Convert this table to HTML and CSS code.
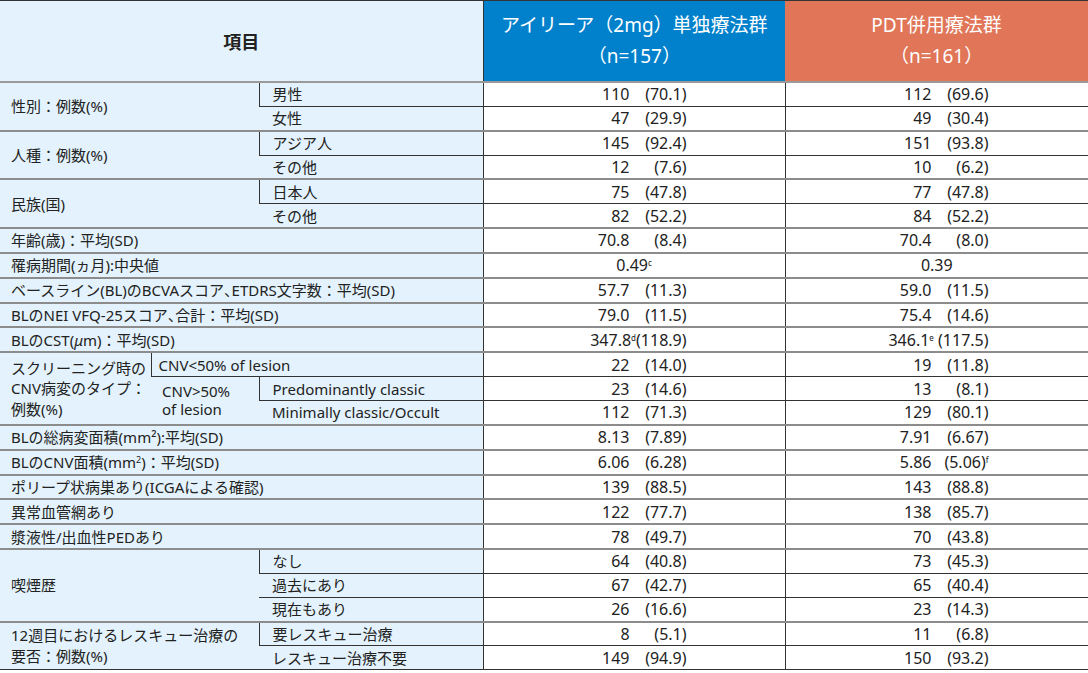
FILE: index.html
```html
<!DOCTYPE html>
<html lang="ja">
<head>
<meta charset="utf-8">
<title>患者背景</title>
<link rel="stylesheet" href="styles.css">
</head>
<body>
<table class="bg-table">
  <colgroup>
    <col class="c-a">
    <col class="c-b">
    <col class="c-c">
    <col class="c-d">
    <col class="c-e">
  </colgroup>
  <thead>
    <tr class="head">
      <th colspan="3" class="h-item">項目</th>
      <th class="h-blue">アイリーア（2mg）単独療法群<br>（n=157）</th>
      <th class="h-orange">PDT併用療法群<br>（n=161）</th>
    </tr>
  </thead>
  <tbody>
    <tr class="g">
      <td colspan="2" rowspan="2" class="lab">性別：例数(%)</td>
      <td class="lab sub">男性</td>
      <td class="num"><span class="n">110</span><span class="p">(70.1)</span></td>
      <td class="num"><span class="n">112</span><span class="p">(69.6)</span></td>
    </tr>
    <tr>
      <td class="lab sub">女性</td>
      <td class="num"><span class="n">47</span><span class="p">(29.9)</span></td>
      <td class="num"><span class="n">49</span><span class="p">(30.4)</span></td>
    </tr>
    <tr class="g">
      <td colspan="2" rowspan="2" class="lab">人種：例数(%)</td>
      <td class="lab sub">アジア人</td>
      <td class="num"><span class="n">145</span><span class="p">(92.4)</span></td>
      <td class="num"><span class="n">151</span><span class="p">(93.8)</span></td>
    </tr>
    <tr>
      <td class="lab sub">その他</td>
      <td class="num"><span class="n">12</span><span class="p">(7.6)</span></td>
      <td class="num"><span class="n">10</span><span class="p">(6.2)</span></td>
    </tr>
    <tr class="g">
      <td colspan="2" rowspan="2" class="lab">民族(国)</td>
      <td class="lab sub">日本人</td>
      <td class="num"><span class="n">75</span><span class="p">(47.8)</span></td>
      <td class="num"><span class="n">77</span><span class="p">(47.8)</span></td>
    </tr>
    <tr>
      <td class="lab sub">その他</td>
      <td class="num"><span class="n">82</span><span class="p">(52.2)</span></td>
      <td class="num"><span class="n">84</span><span class="p">(52.2)</span></td>
    </tr>
    <tr class="g">
      <td colspan="3" class="lab">年齢(歳)：平均(SD)</td>
      <td class="num"><span class="n">70.8</span><span class="p">(8.4)</span></td>
      <td class="num"><span class="n">70.4</span><span class="p">(8.0)</span></td>
    </tr>
    <tr class="g">
      <td colspan="3" class="lab">罹病期間(ヵ月):中央値</td>
      <td class="num center">0.49<sup>c</sup></td>
      <td class="num center">0.39</td>
    </tr>
    <tr class="g">
      <td colspan="3" class="lab">ベースライン(BL)のBCVAスコア<span class="tc">、</span>ETDRS文字数：平均(SD)</td>
      <td class="num"><span class="n">57.7</span><span class="p">(11.3)</span></td>
      <td class="num"><span class="n">59.0</span><span class="p">(11.5)</span></td>
    </tr>
    <tr class="g">
      <td colspan="3" class="lab">BLのNEI VFQ-25スコア<span class="tc">、</span>合計：平均(SD)</td>
      <td class="num"><span class="n">79.0</span><span class="p">(11.5)</span></td>
      <td class="num"><span class="n">75.4</span><span class="p">(14.6)</span></td>
    </tr>
    <tr class="g">
      <td colspan="3" class="lab">BLのCST(<i>μ</i>m)：平均(SD)</td>
      <td class="num"><span class="w">347.8<sup>d</sup>(118.9)</span></td>
      <td class="num"><span class="w">346.1<sup>e</sup> (117.5)</span></td>
    </tr>
    <tr class="g">
      <td rowspan="3" class="lab multi">スクリーニング時の<br>CNV病変のタイプ：<br>例数(%)</td>
      <td colspan="2" class="lab sub-b">CNV&lt;50% of lesion</td>
      <td class="num"><span class="n">22</span><span class="p">(14.0)</span></td>
      <td class="num"><span class="n">19</span><span class="p">(11.8)</span></td>
    </tr>
    <tr>
      <td rowspan="2" class="lab tight">CNV&gt;50%<br>of lesion</td>
      <td class="lab sub">Predominantly classic</td>
      <td class="num"><span class="n">23</span><span class="p">(14.6)</span></td>
      <td class="num"><span class="n">13</span><span class="p">(8.1)</span></td>
    </tr>
    <tr>
      <td class="lab sub">Minimally classic/Occult</td>
      <td class="num"><span class="n">112</span><span class="p">(71.3)</span></td>
      <td class="num"><span class="n">129</span><span class="p">(80.1)</span></td>
    </tr>
    <tr class="g">
      <td colspan="3" class="lab">BLの総病変面積(mm²):平均(SD)</td>
      <td class="num"><span class="n">8.13</span><span class="p">(7.89)</span></td>
      <td class="num"><span class="n">7.91</span><span class="p">(6.67)</span></td>
    </tr>
    <tr class="g">
      <td colspan="3" class="lab">BLのCNV面積(mm<sup class="sq">2</sup>)：平均(SD)</td>
      <td class="num"><span class="n">6.06</span><span class="p">(6.28)</span></td>
      <td class="num"><span class="n">5.86</span><span class="p">(5.06)<sup>f</sup></span></td>
    </tr>
    <tr class="g">
      <td colspan="3" class="lab">ポリープ状病巣あり(ICGAによる確認)</td>
      <td class="num"><span class="n">139</span><span class="p">(88.5)</span></td>
      <td class="num"><span class="n">143</span><span class="p">(88.8)</span></td>
    </tr>
    <tr class="g">
      <td colspan="3" class="lab">異常血管網あり</td>
      <td class="num"><span class="n">122</span><span class="p">(77.7)</span></td>
      <td class="num"><span class="n">138</span><span class="p">(85.7)</span></td>
    </tr>
    <tr class="g">
      <td colspan="3" class="lab">漿液性/出血性PEDあり</td>
      <td class="num"><span class="n">78</span><span class="p">(49.7)</span></td>
      <td class="num"><span class="n">70</span><span class="p">(43.8)</span></td>
    </tr>
    <tr class="g">
      <td colspan="2" rowspan="3" class="lab">喫煙歴</td>
      <td class="lab sub">なし</td>
      <td class="num"><span class="n">64</span><span class="p">(40.8)</span></td>
      <td class="num"><span class="n">73</span><span class="p">(45.3)</span></td>
    </tr>
    <tr>
      <td class="lab sub">過去にあり</td>
      <td class="num"><span class="n">67</span><span class="p">(42.7)</span></td>
      <td class="num"><span class="n">65</span><span class="p">(40.4)</span></td>
    </tr>
    <tr>
      <td class="lab sub">現在もあり</td>
      <td class="num"><span class="n">26</span><span class="p">(16.6)</span></td>
      <td class="num"><span class="n">23</span><span class="p">(14.3)</span></td>
    </tr>
    <tr class="g">
      <td colspan="2" rowspan="2" class="lab multi">12週目におけるレスキュー治療の<br>要否：例数(%)</td>
      <td class="lab sub">要レスキュー治療</td>
      <td class="num"><span class="n">8</span><span class="p">(5.1)</span></td>
      <td class="num"><span class="n">11</span><span class="p">(6.8)</span></td>
    </tr>
    <tr>
      <td class="lab sub">レスキュー治療不要</td>
      <td class="num"><span class="n">149</span><span class="p">(94.9)</span></td>
      <td class="num"><span class="n">150</span><span class="p">(93.2)</span></td>
    </tr>
  </tbody>
</table>
</body>
</html>
```

FILE: styles.css
```css
html, body {
  margin: 0;
  padding: 0;
  background: #ffffff;
}

.bg-table {
  width: 1088px;
  table-layout: fixed;
  border-collapse: collapse;
  font-family: "Noto Sans", "Noto Sans CJK JP", sans-serif;
  font-size: 15px;
  color: #222222;
  border-top: 1px solid #333333;
  border-bottom: 1px solid #333333;
}

.c-a { width: 151px; }
.c-b { width: 108px; }
.c-c { width: 224px; }
.c-d { width: 302px; }
.c-e { width: 303px; }

.head th {
  height: 80px;
  padding: 0;
  font-weight: 400;
  text-align: center;
  vertical-align: middle;
  border-bottom: 2px solid #9a9a9a;
}

.h-item {
  background: #e3f2fc;
  font-size: 18px;
  font-weight: 700 !important;
  color: #222222;
  border-right: 1px solid #333333;
}

.h-blue {
  background: #0181cb;
  color: #ffffff;
  font-size: 19px;
  line-height: 31px;
}

.h-orange {
  background: #e07558;
  color: #ffffff;
  font-size: 19px;
  line-height: 31px;
}

tbody td {
  height: 22.85px;
  padding: 0 0 0 11px;
  line-height: 20px;
  vertical-align: middle;
  white-space: nowrap;
  border-top: 1px solid #333333;
  border-left: 1px solid #333333;
}

tbody tr.g td {
  border-top: 2px solid #8c8c8c;
}

tbody tr td:first-child {
  border-left: none;
}

.lab {
  background: #e3f2fc;
}

.sub {
  padding-left: 13px;
}

.sub-b {
  padding-left: 7px;
}

.tc {
  letter-spacing: -0.5em;
}

.multi {
  line-height: 20.5px;
}

.tight {
  line-height: 18px;
}

.num {
  background: #ffffff;
  padding: 0;
  text-align: left;
  font-size: 16px;
}

.num.center {
  text-align: center;
}

.n {
  display: inline-block;
  width: 146px;
  text-align: right;
}

.p {
  display: inline-block;
  width: 57px;
  text-align: right;
}

.w {
  display: inline-block;
  width: 203px;
  text-align: right;
}

sup {
  font-size: 8px;
  line-height: 0;
  vertical-align: 5px;
}

.sq {
  font-size: 9px;
  vertical-align: 5px;
}
```
